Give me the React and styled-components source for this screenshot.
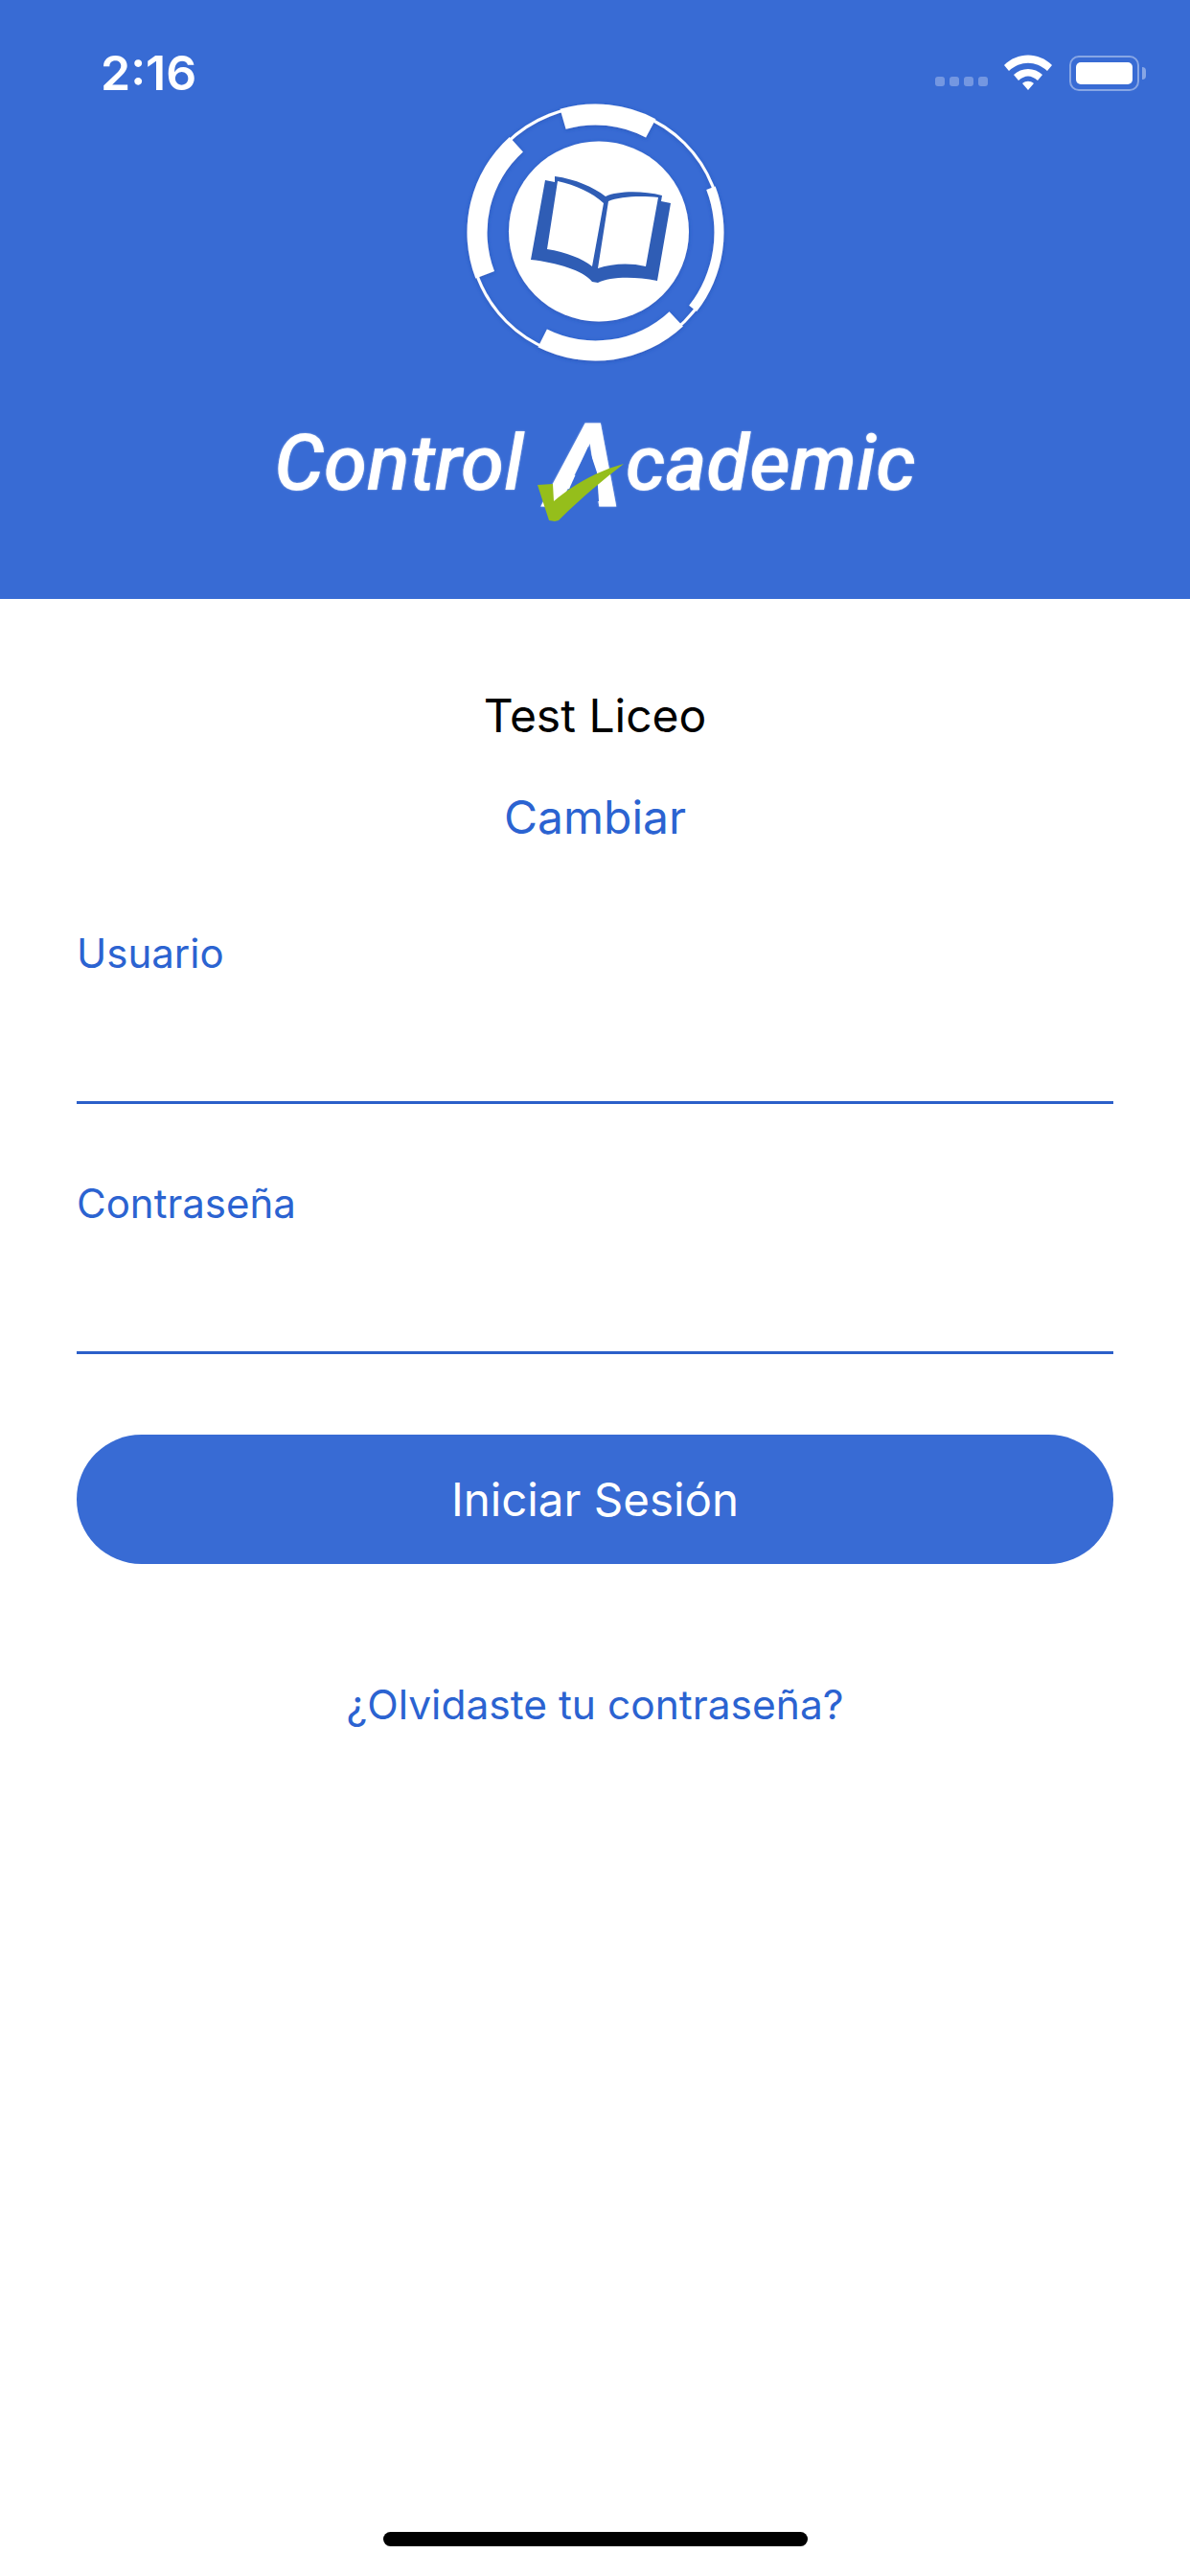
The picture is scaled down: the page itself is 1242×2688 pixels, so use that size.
import styled, { createGlobalStyle } from "styled-components";

const GlobalStyle = createGlobalStyle`
  html, body {
    margin: 0;
    padding: 0;
    background: #ffffff;
    font-family: "Inter", "Liberation Sans", sans-serif;
  }
`;

// ring segment of the logo, angles in degrees clockwise from the top
function band(inner, outer, from, to) {
  const cx = 200.5;
  const cy = 162.5;
  const point = (r, a) => {
    const rad = (a * Math.PI) / 180;
    return `${(cx + r * Math.sin(rad)).toFixed(2)} ${(cy - r * Math.cos(rad)).toFixed(2)}`;
  };
  const large = to - from > 180 ? 1 : 0;
  return `M${point(outer, from)} A${outer} ${outer} 0 ${large} 1 ${point(outer, to)} L${point(inner, to)} A${inner} ${inner} 0 ${large} 0 ${point(inner, from)} Z`;
}

function Wifi() {
  return (
    <svg width="50" height="38" viewBox="0 0 50 38">
      <path d="M0 11 C14 -3 36 -3 50 11 L45 17 C33 6 17 6 5 17 Z" fill="#fff" />
      <path d="M10 21 C18 13 32 13 40 21 L35 27 C28 21 22 21 15 27 Z" fill="#fff" />
      <path d="M19 30 C23 27 27 27 31 30 L25 37 Z" fill="#fff" />
    </svg>
  );
}

function LogoMark() {
  return (
    <svg width="400" height="320" viewBox="0 0 400 320">
      <defs>
        <filter id="soft" x="-10%" y="-10%" width="120%" height="120%">
          <feDropShadow dx="0" dy="1" stdDeviation="2" floodColor="#1f4aa8" floodOpacity="0.55" />
        </filter>
      </defs>
      <g filter="url(#soft)">
        <circle cx="200.5" cy="162.5" r="131.5" fill="none" stroke="#fff" strokeWidth="3" />
        <path d={band(112, 134, -16, 28)} fill="#fff" />
        <path d={band(113, 134, -111, -42)} fill="#fff" />
        <path d={band(113, 134, 137, 206.6)} fill="#fff" />
        <path d={band(124, 134, 69, 128)} fill="#fff" />
        <circle cx="204" cy="161.5" r="94" fill="#fff" />
      </g>
      <path d="M148 108 L158 110 L158 104 C180 107 198 115 211 125 C224 119 250 119 270 124 L269 130 L279 132 L265 213 C240 208 215 209 203 215 L197 214 C188 202 160 194 133 191 Z" fill="#2f5db5" />
      <path d="M161 109 C180 113 197 121 209 132 L197 198 C187 190 170 183 150 180 Z" fill="#fff" />
      <path d="M214 130 C225 125 248 124 266 126 L253 198 C236 194 218 195 203 200 Z" fill="#fff" />
    </svg>
  );
}

function Check() {
  return (
    <svg width="100" height="86" viewBox="0 -20 100 86">
      <path d="M55 -15 L64 12 L66 42 L30 42 L36 27 Z" fill="#386bd4" />
      <path d="M2 25 L18 24 L19 42 C40 24 66 10 92 3 C70 20 46 40 24 62 L20 63 L14 62 Z" fill="#95be1b" />
    </svg>
  );
}

export default function App() {
  return (
    <Page>
      <GlobalStyle />
      <Header>
        <StatusBar>
          <Clock>2:16</Clock>
          <StatusIcons>
            <Signal>
              <SignalDot />
              <SignalDot />
              <SignalDot />
              <SignalDot />
            </Signal>
            <Wifi />
            <Battery>
              <BatteryFill />
            </Battery>
            <BatteryCap />
          </StatusIcons>
        </StatusBar>
        <LogoMark />
        <Wordmark>
          <WordPart>Control</WordPart>
          <BigLetter>
            A
            <CheckSlot>
              <Check />
            </CheckSlot>
          </BigLetter>
          <WordPart>cademic</WordPart>
        </Wordmark>
      </Header>
      <Content>
        <SchoolName>Test Liceo</SchoolName>
        <ChangeLink>Cambiar</ChangeLink>
        <Field>
          <FieldLabel htmlFor="usuario">Usuario</FieldLabel>
          <FieldInput id="usuario" type="text" />
        </Field>
        <Field>
          <FieldLabel htmlFor="clave">Contraseña</FieldLabel>
          <FieldInput id="clave" type="password" />
        </Field>
        <SubmitButton type="button">Iniciar Sesión</SubmitButton>
        <ForgotLink>¿Olvidaste tu contraseña?</ForgotLink>
      </Content>
      <HomeIndicator />
    </Page>
  );
}

const Page = styled.div`
  width: 1242px;
  height: 2688px;
  display: flex;
  flex-direction: column;
  overflow: hidden;
  background: #ffffff;
`;

const Header = styled.header`
  position: relative;
  height: 625px;
  box-sizing: border-box;
  padding-top: 80px;
  background: #386bd4;
  display: flex;
  flex-direction: column;
  align-items: center;
`;

const StatusBar = styled.div`
  position: absolute;
  top: 0;
  left: 0;
  right: 0;
  height: 150px;
  box-sizing: border-box;
  padding: 49px 46px 0 105px;
  display: flex;
  justify-content: space-between;
  align-items: flex-start;
`;

const Clock = styled.span`
  font-size: 50px;
  line-height: 54px;
  font-weight: 600;
  color: #ffffff;
`;

const StatusIcons = styled.div`
  display: flex;
  align-items: center;
  margin-top: 8px;
`;

const Signal = styled.div`
  display: flex;
  gap: 5px;
  margin: 18px 17px 0 0;
`;

const SignalDot = styled.span`
  width: 10px;
  height: 10px;
  border-radius: 3px;
  background: rgba(255, 255, 255, 0.3);
`;

const Battery = styled.div`
  width: 73px;
  height: 37px;
  margin-left: 18px;
  box-sizing: border-box;
  padding: 5px;
  border: 2px solid rgba(255, 255, 255, 0.4);
  border-radius: 10px;
`;

const BatteryFill = styled.div`
  width: 100%;
  height: 100%;
  background: #ffffff;
  border-radius: 5px;
`;

const BatteryCap = styled.div`
  width: 4px;
  height: 13px;
  margin-left: 3px;
  background: rgba(255, 255, 255, 0.4);
  border-radius: 0 4px 4px 0;
`;

const Wordmark = styled.div`
  margin-top: 41px;
  white-space: nowrap;
  line-height: 84px;
  font-family: "Roboto", "Liberation Sans", sans-serif;
  font-style: italic;
  font-weight: 500;
  color: #ffffff;
  text-shadow: 0 0 2px rgba(255, 255, 255, 0.6);
`;

const WordPart = styled.span`
  font-size: 82px;
`;

const BigLetter = styled.span`
  position: relative;
  margin: 0 3px 0 24px;
  vertical-align: -17px;
  font-size: 122px;
  font-weight: 700;
`;

const CheckSlot = styled.span`
  position: absolute;
  left: -11px;
  top: 46px;
  line-height: 0;
`;

const Content = styled.main`
  padding: 95px 80px 0;
  display: flex;
  flex-direction: column;
`;

const SchoolName = styled.div`
  text-align: center;
  font-size: 48px;
  line-height: 54px;
  color: #000000;
`;

const ChangeLink = styled.a`
  margin-top: 52px;
  text-align: center;
  font-size: 48px;
  line-height: 54px;
  color: #2b63d1;
`;

const Field = styled.div`
  margin-top: 90px;
  display: flex;
  flex-direction: column;

  & + & {
    margin-top: 79px;
  }
`;

const FieldLabel = styled.label`
  font-size: 42px;
  line-height: 50px;
  color: #2b63d1;
`;

const FieldInput = styled.input`
  height: 132px;
  box-sizing: border-box;
  padding: 0;
  border: 0;
  border-bottom: 3px solid #2b5fc9;
  outline: none;
  background: transparent;
  font: inherit;
`;

const SubmitButton = styled.button`
  margin-top: 84px;
  height: 135px;
  border: 0;
  border-radius: 68px;
  background: #386bd4;
  color: #ffffff;
  font-family: inherit;
  font-size: 47.5px;
`;

const ForgotLink = styled.a`
  margin-top: 120px;
  text-align: center;
  font-size: 42.5px;
  line-height: 54px;
  color: #2b63d1;
`;

const HomeIndicator = styled.div`
  width: 443px;
  height: 15px;
  margin: auto auto 31px;
  flex-shrink: 0;
  border-radius: 8px;
  background: #000000;
`;
